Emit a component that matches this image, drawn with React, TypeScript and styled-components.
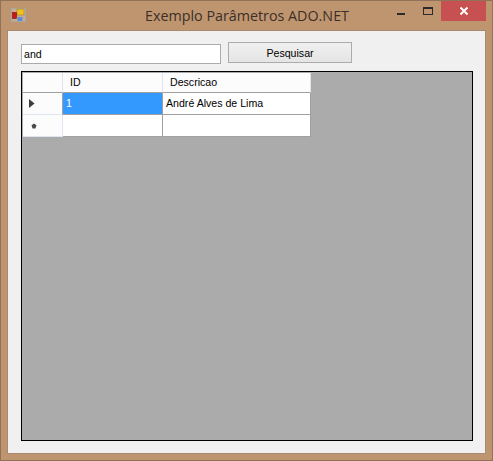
import React from 'react'
import styled, { createGlobalStyle } from 'styled-components'

const Global = createGlobalStyle`
	html, body {
		margin: 0;
		padding: 0;
		background: #bf9570;
	}
	* {
		box-sizing: border-box;
	}
`

const Window = styled.div`
	width: 493px;
	height: 461px;
	background: #bf9570;
	border: 1px solid #8f7258;
	display: flex;
	flex-direction: column;
	font-family: "Liberation Sans", Arial, sans-serif;
	overflow: hidden;
`

const TitleBar = styled.div`
	height: 29px;
	flex: none;
	display: flex;
	align-items: flex-start;
	padding-left: 10px;
`

const AppIcon = styled.svg`
	width: 16px;
	height: 16px;
	margin-top: 7px;
	flex: none;
`

const Title = styled.div`
	flex: 1;
	height: 29px;
	line-height: 30px;
	text-align: center;
	font-family: "Open Sans", "Noto Sans", sans-serif;
	font-size: 14.3px;
	color: #3a3028;
	padding-left: 78px;
`

const Controls = styled.div`
	display: flex;
	align-items: flex-start;
	margin-right: 6px;
`

const CaptionButton = styled.div<{ $close?: boolean }>`
	width: ${props => props.$close?'45px':'26px'};
	height: 20px;
	background: ${props => props.$close?'#c75050':'transparent'};
	display: flex;
	align-items: center;
	justify-content: center;
`

const Client = styled.div`
	margin: 0 6px 6px 6px;
	flex: 1;
	background: #f0f0f0;
	border: 1px solid #a98a6e;
	padding: 12px 12px 12px 13px;
	display: flex;
	flex-direction: column;
`

const SearchRow = styled.div`
	display: flex;
	align-items: flex-start;
	height: 28px;
	flex: none;
`

const SearchBox = styled.div`
	width: 200px;
	height: 20px;
	margin-top: 1px;
	background: #fff;
	border: 1px solid #ababab;
	font-size: 10.6px;
	line-height: 18px;
	padding-left: 2px;
	color: #000;
`

const SearchButton = styled.button`
	width: 124px;
	height: 21px;
	margin-left: 7px;
	margin-top: -1px;
	background: linear-gradient(#f0f0f0, #e5e5e5);
	border: 1px solid #acacac;
	font-family: "Liberation Sans", Arial, sans-serif;
	font-size: 10.6px;
	color: #000;
	padding: 0;
`

const GridView = styled.div`
	width: 452px;
	height: 370px;
	background: #ababab;
	border: 1px solid #000;
	padding: 1px 0 0 1px;
`

const Table = styled.div`
	display: grid;
	grid-template-columns: 40px 100px 148px;
	grid-template-rows: 20px 22px 22px;
	width: 288px;
`

const HeaderCell = styled.div`
	background: #fcfcfc;
	border-right: 1px solid #e3e3f0;
	border-bottom: 1px solid #a0a0a0;
	font-size: 10.6px;
	line-height: 19px;
	padding-left: 7px;
	color: #000;
`

const RowHead = styled.div`
	background: #fcfcfc;
	border-right: 1px solid #a0a0a0;
	border-bottom: 1px solid #dfe6f2;
	display: flex;
	align-items: center;
	padding-left: 6px;
`

const NewRowHead = styled(RowHead)`
	padding-left: 8px;
	border-right: 1px solid #dfe6f2;
`

const Cell = styled.div<{ $selected?: boolean }>`
	background: ${props => props.$selected?'#3399ff':'#fff'};
	color: ${props => props.$selected?'#fff':'#000'};
	border-right: 1px solid #a0a0a0;
	border-bottom: 1px solid #a0a0a0;
	font-size: 10.6px;
	line-height: 20px;
	padding-left: 3px;
	white-space: nowrap;
`

export default function App() {
	return <>
		<Global/>
		<Window>
			<TitleBar>
				<AppIcon viewBox="0 0 16 16">
					<rect x="0.5" y="0.5" width="14" height="13" fill="#c9ab90" stroke="#a8a8a8"/>
					<rect x="6" y="1" width="7" height="6" fill="#f0c020" stroke="#a88020" strokeWidth="0.6"/>
					<rect x="1.5" y="4.5" width="4" height="6" fill="#c81818" stroke="#801010" strokeWidth="0.6"/>
					<rect x="6.5" y="9" width="5" height="4" fill="#5c8ed8"/>
				</AppIcon>
				<Title>Exemplo Parâmetros ADO.NET</Title>
				<Controls>
					<CaptionButton>
						<svg width="10" height="10" viewBox="0 0 10 10"><rect x="0" y="7" width="8" height="2" fill="#2b2b2b"/></svg>
					</CaptionButton>
					<CaptionButton>
						<svg width="10" height="10" viewBox="0 0 10 10"><rect x="0.5" y="1.5" width="9" height="7" fill="none" stroke="#2b2b2b"/><rect x="0" y="1" width="10" height="2" fill="#2b2b2b"/></svg>
					</CaptionButton>
					<CaptionButton $close>
						<svg width="10" height="10" viewBox="0 0 10 10"><path d="M1.5 1.5 L8.5 8.5 M8.5 1.5 L1.5 8.5" stroke="#fff" strokeWidth="2"/></svg>
					</CaptionButton>
				</Controls>
			</TitleBar>
			<Client>
				<SearchRow>
					<SearchBox>and</SearchBox>
					<SearchButton>Pesquisar</SearchButton>
				</SearchRow>
				<GridView>
					<Table>
						<HeaderCell/>
						<HeaderCell>ID</HeaderCell>
						<HeaderCell>Descricao</HeaderCell>
						<RowHead>
							<svg width="6" height="9" viewBox="0 0 6 9"><path d="M0 0 L5.5 4.5 L0 9 Z" fill="#3c3c3c"/></svg>
						</RowHead>
						<Cell $selected>1</Cell>
						<Cell>André Alves de Lima</Cell>
						<NewRowHead>
							<svg width="6" height="6" viewBox="0 0 6 6"><path d="M3 0.5 L5.5 2.3 L4.5 5.5 L1.5 5.5 L0.5 2.3 Z" fill="#4a4a4a"/></svg>
						</NewRowHead>
						<Cell/>
						<Cell/>
					</Table>
				</GridView>
			</Client>
		</Window>
	</>
}
